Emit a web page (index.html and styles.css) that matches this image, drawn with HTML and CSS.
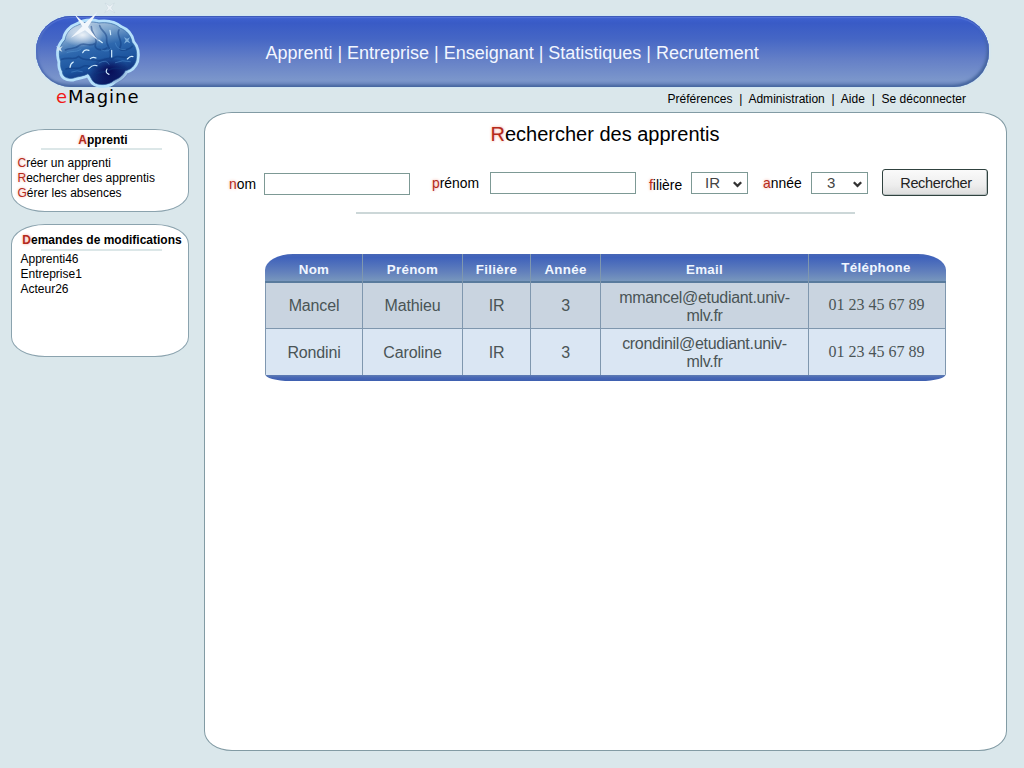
FILE: index.html
```html
<!DOCTYPE html>
<html lang="fr">
<head>
<meta charset="utf-8">
<title>eMagine</title>
<link rel="stylesheet" href="styles.css">
</head>
<body>
<header class="banner">
  <nav class="main-nav">Apprenti | Entreprise | Enseignant | Statistiques | Recrutement</nav>
  <svg class="brain" viewBox="0 0 390 270" width="130" height="90" aria-hidden="true">
    <defs>
      <linearGradient id="lobe" x1="0.3" y1="0" x2="0.6" y2="1">
        <stop offset="0" stop-color="#b9cde2"/>
        <stop offset="0.2" stop-color="#7ba3cd"/>
        <stop offset="0.42" stop-color="#2e68ae"/>
        <stop offset="0.7" stop-color="#1a529d"/>
        <stop offset="1" stop-color="#0a1760"/>
      </linearGradient>
      <radialGradient id="shine"><stop offset="0" stop-color="#fff" stop-opacity=".85"/><stop offset="1" stop-color="#fff" stop-opacity="0"/></radialGradient>
      <radialGradient id="deep"><stop offset="0" stop-color="#06044f" stop-opacity=".9"/><stop offset="1" stop-color="#06044f" stop-opacity="0"/></radialGradient>
      <path id="shape" d="M92 185C84 160 88 137 105 120C108 98 124 82 143 76C162 64 188 64 207 69C230 66 254 70 270 84C291 92 303 108 306 127C321 143 322 163 318 183C312 200 302 209 286 212C276 232 262 236 251 242C237 256 204 258 191 246C184 240 182 228 174 221C159 230 142 229 128 235C110 237 97 229 97 214C92 205 91 196 92 185Z"/>
    </defs>
    <use href="#shape" fill="#b5e0fb" stroke="#b5e0fb" stroke-width="19" stroke-linejoin="round"/>
    <use href="#shape" fill="url(#lobe)" stroke="#2b5f9f" stroke-width="2"/>
    <ellipse cx="158" cy="105" rx="62" ry="36" fill="url(#shine)"/>
    <ellipse cx="238" cy="212" rx="58" ry="42" fill="url(#deep)"/>
    <g fill="none" stroke="#0b3679" stroke-opacity=".45" stroke-width="5" stroke-linecap="round">
      <path d="M106 150C122 142 134 150 147 137S177 143 196 130M95 178C118 169 132 183 146 169M147 170C163 185 180 176 201 181S231 168 244 178M184 80C183 103 205 110 197 130S217 154 231 144M209 77C214 95 233 98 230 118S250 149 239 175M267 90C257 105 279 121 271 140S299 149 307 139M245 178C264 159 285 181 310 169M108 207C130 200 143 211 158 200S187 211 209 201M193 224C210 211 222 221 238 210S264 211 284 202"/>
    </g>
    <g fill="none" stroke="#5c9bd7" stroke-opacity=".45" stroke-width="3" stroke-linecap="round">
      <path d="M111 158C129 151 141 158 153 147M214 150Q236 158 243 145M256 129Q260 151 286 149M207 189Q230 176 237 193M125 216Q142 209 157 215M256 188Q278 178 301 185"/>
    </g>
    <g fill="none" stroke="#d5efff" stroke-width="3.5" stroke-linecap="round">
      <path d="M120 202Q121 191 130 186M158 158Q164 146 177 151M181 176Q188 169 198 174M176 206Q189 192 201 197M245 151V171M240 91L242 104M292 177Q301 167 309 170M231 207Q224 218 237 223M206 120L217 128"/>
    </g>
    <path d="M133 42L164 70L202 36L174 81L205 122L165 91L123 113L157 79Z" fill="#f2f7fc"/>
    <g fill="#edf3f7" stroke="#b8cbd5" stroke-width="1">
      <path d="M225 9L239 18L253 9L244 24L255 39L239 29L224 38L234 24Z"/>
      <path d="M282 111L291 116L300 112L295 121L301 130L291 125L282 131L287 121Z" fill="#7eafdc" stroke="none"/>
      <path d="M78 138L88 143L98 138L92 147L97 155L87 151L79 154L84 146Z" fill="#cfe3f2" stroke="none"/>
    </g>
  </svg>
</header>
<div class="subbar">
  <div class="brand"><span>e</span>Magine</div>
  <nav class="tools">Préférences&nbsp; |&nbsp; Administration&nbsp; |&nbsp; Aide&nbsp; |&nbsp; Se déconnecter</nav>
</div>
<div class="columns">
  <aside class="sidebar">
    <section class="card menu">
      <h2><span class="cap">A</span>pprenti</h2>
      <ul>
        <li><span class="cap">C</span>réer un apprenti</li>
        <li><span class="cap">R</span>echercher des apprentis</li>
        <li><span class="cap">G</span>érer les absences</li>
      </ul>
    </section>
    <section class="card requests">
      <h2><span class="cap">D</span>emandes de modifications</h2>
      <ul><li>Apprenti46</li><li>Entreprise1</li><li>Acteur26</li></ul>
    </section>
  </aside>
  <main class="panel">
    <h1><span class="cap">R</span>echercher des apprentis</h1>
    <form class="search">
      <label class="f-nom"><span class="cap">n</span>om</label>
      <span class="field field-nom"></span>
      <label class="f-prenom"><span class="cap">p</span>rénom</label>
      <span class="field field-prenom"></span>
      <label class="f-filiere"><span class="cap">f</span>ilière</label>
      <span class="select sel-ir"><span>IR</span><svg width="9" height="7" viewBox="0 0 9 7"><path d="M.8 1.2L4.5 4.8L8.2 1.2"/></svg></span>
      <label class="f-annee"><span class="cap">a</span>nnée</label>
      <span class="select sel-year"><span>3</span><svg width="9" height="7" viewBox="0 0 9 7"><path d="M.8 1.2L4.5 4.8L8.2 1.2"/></svg></span>
      <button type="button">Rechercher</button>
    </form>
    <div class="rule"></div>
    <div class="results">
      <div class="row head"><div>Nom</div><div>Prénom</div><div>Filière</div><div>Année</div><div>Email</div><div class="up">Téléphone</div></div>
      <div class="row first"><div>Mancel</div><div>Mathieu</div><div>IR</div><div>3</div><div class="mail">mmancel@etudiant.univ-<br>mlv.fr</div><div class="phone">01 23 45 67 89</div></div>
      <div class="row second"><div>Rondini</div><div>Caroline</div><div>IR</div><div>3</div><div class="mail">crondinil@etudiant.univ-<br>mlv.fr</div><div class="phone">01 23 45 67 89</div></div>
      <div class="foot"></div>
    </div>
  </main>
</div>
</body>
</html>
```
FILE: styles.css
```css
* { box-sizing: border-box; }
body {
  margin: 0;
  width: 1024px;
  height: 768px;
  overflow: hidden;
  padding-top: 16px;
  background: #dae7eb;
  color: #000;
  font-family: "Liberation Sans", Arial, sans-serif;
}
h1, h2, ul { margin: 0; padding: 0; list-style: none; }
.cap { color: #b52a1c; text-shadow: 0 0 3px #f0a090; }

.banner {
  position: relative;
  width: 953px;
  height: 71px;
  margin-left: 36px;
  border-radius: 35px;
  background: linear-gradient(#3f62d2 0, #395bc6 10%, #4566c5 32%, #6580c7 62%, #7b96cb 90%, #6582b9 100%);
  box-shadow: 0 0 3px #c4e4fa, inset 0 1px 1px #3c58b5, inset 0 2px 1px #5877dc, inset -2px -2px 3px #45659e, inset 2px 0 2px #5573bd;
}
.main-nav {
  padding: 27px 0 0 229.5px;
  font-size: 18px;
  line-height: 21px;
  letter-spacing: -0.01px;
  color: #f2f6ff;
  white-space: nowrap;
}
.brain { position: absolute; left: -6px; top: -16px; }

.subbar {
  display: flex;
  justify-content: space-between;
  height: 25px;
  padding: 0 58px 0 56px;
}
.brand {
  font: 18px/20px "DejaVu Sans", Verdana, sans-serif;
  letter-spacing: 1px;
}
.brand span { color: #f01818; }
.tools { font-size: 12px; line-height: 14px; padding-top: 5px; letter-spacing: 0.03px; white-space: nowrap; }

.columns { display: flex; padding-left: 11px; gap: 15px; }
.sidebar {
  display: flex;
  flex-direction: column;
  gap: 12px;
  width: 178px;
  padding-top: 17px;
}
.card {
  border: 1px solid #8ba3ae;
  border-radius: 34px / 20px;
  background: #fff;
  font-size: 12px;
  line-height: 15px;
}
.card h2 {
  font-size: 12px;
  line-height: 15px;
  text-align: center;
  white-space: nowrap;
}
.card h2::after {
  content: "";
  display: block;
  width: 121px;
  height: 2px;
  background: #dce7e8;
}
.menu { height: 83px; padding-top: 3px; }
.menu h2 { padding-left: 6px; }
.menu h2::after { margin: 0 0 0 23px; }
.menu ul { padding: 6px 0 0 5.5px; }
.requests { height: 133px; padding-top: 8px; }
.requests h2 { padding-left: 4px; }
.requests h2::after { margin: 1px 0 0 25px; }
.requests ul { padding: 1px 0 0 8.5px; }

.panel {
  width: 803px;
  height: 639px;
  border: 1px solid #829ba4;
  border-radius: 28px / 20px;
  background: #fff;
}
h1 {
  padding-top: 9px;
  padding-left: 285.5px;
  font-size: 20px;
  line-height: 24px;
  font-weight: normal;
  white-space: nowrap;
}
.search {
  display: flex;
  align-items: flex-start;
  height: 30px;
  margin: 23px 0 0 24px;
  font-size: 13.9px;
  line-height: 16px;
}
.search label { flex: none; white-space: nowrap; }
.f-nom { width: 35px; padding-top: 7px; }
.field { flex: none; width: 146px; height: 22px; border: 1px solid #7d9995; background: #fff; }
.field-nom { margin-top: 4px; }
.f-prenom { width: 58px; margin-left: 22px; padding-top: 6px; }
.field-prenom { margin-top: 3px; }
.f-filiere { width: 42px; margin-left: 13px; padding-top: 8px; }
.select {
  flex: none;
  display: flex;
  align-items: center;
  justify-content: space-between;
  width: 57px;
  height: 22px;
  margin-top: 3px;
  padding: 0 5px 0 13px;
  border: 1px solid #7d9995;
  font-size: 15px;
  color: #444;
}
.select svg { margin-top: 3px; fill: none; stroke: #333; stroke-width: 2.3; }
.sel-year { padding-left: 15px; }
.f-annee { width: 48px; margin-left: 15px; padding-top: 6px; }
button {
  flex: none;
  width: 106px;
  height: 27px;
  margin: 0 0 0 14px;
  padding: 0 0 0 2px;
  border: 1px solid #30423f;
  border-radius: 3px;
  background: linear-gradient(#fafafa, #eeeeee 60%, #dcdcdc);
  box-shadow: inset -1px -1px 0 #b8c0c0;
  font: 14.5px/18px "Liberation Sans", Arial, sans-serif;
  letter-spacing: -0.35px;
  color: #222;
}
.rule { width: 499px; height: 2px; margin: 13px 0 0 151px; background: #ccd7d8; }

.results {
  width: 681px;
  margin: 40px 0 0 60px;
  border-radius: 28px 28px 25px 25px / 16px 16px 7px 7px;
  overflow: hidden;
  font-size: 16px;
  line-height: 18px;
  color: #4a5456;
}
.row {
  display: grid;
  grid-template-columns: 97px 100px 68px 70px 208px 137px;
  border-left: 1px solid #7f97b0;
}
.row > div {
  display: flex;
  align-items: center;
  justify-content: center;
  border-right: 1px solid #7f97ae;
  padding-top: 1px;
  text-align: center;
  letter-spacing: -0.15px;
}
.head {
  height: 29px;
  background: linear-gradient(#4766b5 0, #3f62bb 12%, #6482bc 65%, #7897bd 93%, #597b9d 94%);
  color: #f0f6ff;
  font-size: 13.33px;
  font-weight: bold;
  border-left-color: transparent;
}
.head > div { padding-top: 3px; letter-spacing: 0.3px; }
.head > div:last-child { border-right-color: transparent; }
.head .up { padding: 0 2px 1px 0; }
.first { height: 46px; background: #c9d4e0; border-bottom: 1px solid #7f97ae; }
.second { height: 46px; background: #dae6f3; }
.row .mail { padding-top: 2px; letter-spacing: -0.3px; }
.row .phone { font-family: "Liberation Serif", "Times New Roman", serif; letter-spacing: 0; padding: 0 1px 1px 0; }
.foot { height: 6px; background: linear-gradient(#5f7db2, #4766b5 45%, #3e60b0); }
```
